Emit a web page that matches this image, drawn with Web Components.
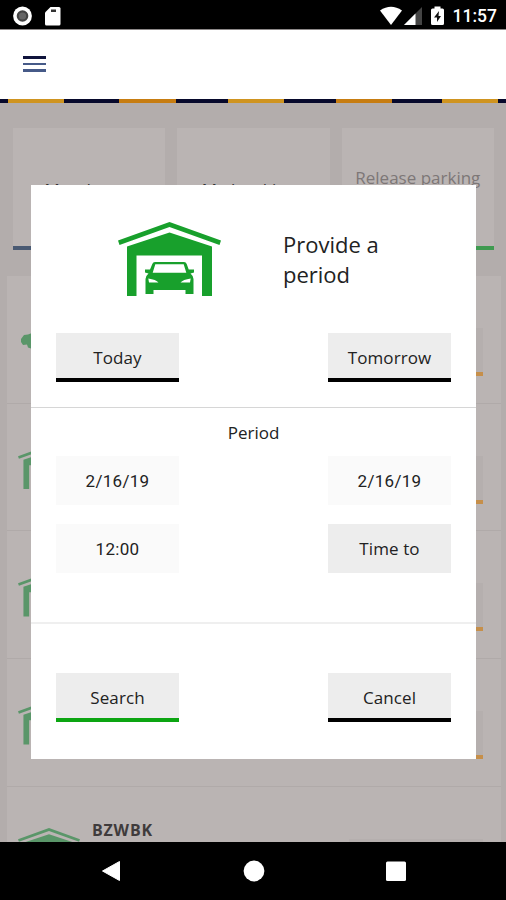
<!DOCTYPE html>
<html lang="en">
<head>
<meta charset="utf-8">
<title>Parking</title>
<style>
    html, body{
        margin: 0;
        height: 100%;
        overflow: hidden;
    }
    body{
        font-family: "Open Sans", "Noto Sans", sans-serif;
        color: #222;
    }
</style>
</head>
<body>
<parking-app>
    <status-bar slot="top" time="11:57"></status-bar>
    <app-bar slot="top"></app-bar>
    <tile-row>
        <menu-tile accent="#4a5a73">Mandatory</menu-tile>
        <menu-tile accent="#4a5a73">My bookings</menu-tile>
        <menu-tile accent="#3f9a50" muted>Release parking</menu-tile>
    </tile-row>
    <parking-list>
        <parking-row icon="tree"></parking-row>
        <parking-row icon="garage"></parking-row>
        <parking-row icon="garage"></parking-row>
        <parking-row icon="garage"></parking-row>
        <parking-row icon="garage">BZWBK</parking-row>
    </parking-list>
    <period-dialog slot="overlay" heading="Provide a period">
        <flat-button slot="days" accent="#000">Today</flat-button>
        <flat-button slot="days" accent="#000">Tomorrow</flat-button>
        <flat-button slot="period" filled>2/16/19</flat-button>
        <flat-button slot="period" filled>2/16/19</flat-button>
        <flat-button slot="period" filled>12:00</flat-button>
        <flat-button slot="period">Time to</flat-button>
        <flat-button slot="actions" accent="#0ca512">Search</flat-button>
        <flat-button slot="actions" accent="#000">Cancel</flat-button>
    </period-dialog>
    <nav-bar slot="bottom"></nav-bar>
</parking-app>

<script>
(function () {
'use strict';

const makeTemplate = function (strings) {
    let template = document.createElement('template');
    template.innerHTML = strings[0];
    return template;
};

const attachTemplate = function (element, template) {
    let shadowRoot = element.attachShadow({ mode: 'open' });
    shadowRoot.appendChild(document.importNode(template.content, true));
    return shadowRoot;
};

// elements that only need markup and styles
const defineStatic = function (name, template) {
    customElements.define(name, class extends HTMLElement {
        constructor() {
            super();
            attachTemplate(this, template);
        }
    });
};

defineStatic('parking-app', makeTemplate`<style>
    :host{
        display: flex;
        flex-direction: column;
        height: 100vh;
        overflow: hidden;
        background: #b3adac;
    }
    main{
        position: relative;
        flex: 1;
        min-height: 0;
        overflow: hidden;
    }
</style>
    <slot name="top"></slot>
    <main>
        <slot></slot>
        <slot name="overlay"></slot>
    </main>
    <slot name="bottom"></slot>
`);

const statusTemplate = makeTemplate`<style>
    :host{
        display: flex;
        align-items: center;
        box-sizing: border-box;
        height: 30px;
        padding: 0 9px 0 12px;
        background: #000;
        border-bottom: 1px solid #8c8888;
        color: #fff;
        font: 500 17.500px/30px Roboto, sans-serif;
    }
    svg{
        display: block;
    }
    .card{
        margin-left: 11px;
    }
    .wifi{
        margin-left: auto;
    }
    .signal{
        margin-left: 1px;
    }
    .battery{
        margin: 0 9px 0 9px;
    }
    .time{
        padding-top: 3px;
    }
</style>
    <svg width="22" height="22" viewBox="0 0 22 22"><circle cx="10.5" cy="12" r="9.4" fill="#fff"/><circle cx="10.5" cy="12" r="5.8" fill="#444"/><circle cx="10.5" cy="12" r="3.6" fill="#666"/></svg>
    <svg class="card" width="16" height="22" viewBox="0 0 16 22"><path fill="#fff" d="M5.500 3H14q1.500 0 1.500 1.500V20q0 1.500-1.500 1.500H1.500Q0 21.500 0 20V8.500z"/><path fill="#333" d="M6 5.500h5v2.500H6z"/></svg>
    <svg class="wifi" width="24" height="22" viewBox="0 0 24 22"><path fill="#fff" d="M1 6.500Q12-1 23 6.500L12 21z"/></svg>
    <svg class="signal" width="18" height="22" viewBox="0 0 18 22"><path fill="#444" d="M0 21L18 3v18z"/><path fill="#fff" d="M0 21L11.500 9.500V21z"/></svg>
    <svg class="battery" width="13" height="22" viewBox="0 0 13 22"><path fill="#fff" d="M3.500 2.500h6v2h2q1.500 0 1.500 1.500v13.500q0 1.500-1.500 1.500h-10Q0 21 0 19.500V6q0-1.500 1.500-1.500h2z"/><path fill="#111" d="M8 7l-5 6.500h3V18l4-6H7.500z"/></svg>
    <span class="time"></span>
`;
class StatusBar extends HTMLElement {
    constructor() {
        super();
        attachTemplate(this, statusTemplate);
    }
    connectedCallback() {
        this.shadowRoot.querySelector('.time').textContent = this.getAttribute('time');
    }
}
customElements.define('status-bar', StatusBar);

defineStatic('app-bar', makeTemplate`<style>
    :host{
        display: flex;
        flex-direction: column;
        height: 73px;
        background: #fff;
    }
    .menu{
        flex: 1;
        display: flex;
        flex-direction: column;
        gap: 4px;
        padding: 26px 0 0 23px;
    }
    i{
        width: 23px;
        height: 2.5px;
        background: #465a88;
    }
    i:first-child{
        background: #10143c;
    }
    .stripe{
        height: 4px;
        background: linear-gradient(90deg,
            #07092c 8px, #cf9420 8px 64px, #07092c 64px 119px, #c77d12 119px 176px,
            #07092c 176px 228px, #cf9420 228px 284px, #07092c 284px 336px, #c77d12 336px 392px,
            #07092c 392px 442px, #cf9420 442px 498px, #07092c 498px);
    }
</style>
    <div class="menu"><i></i><i></i><i></i></div>
    <div class="stripe"></div>
`);

defineStatic('tile-row', makeTemplate`<style>
    :host{
        display: grid;
        grid-template-columns: repeat(3, 1fr);
        gap: 12px;
        padding: 25px 12px 0 13px;
    }
</style>
    <slot></slot>
`);

const tileTemplate = makeTemplate`<style>
    :host{
        display: block;
        box-sizing: border-box;
        height: 122px;
        padding-top: 38px;
        background: #bab4b3;
        border-bottom: 4px solid var(--accent);
        font-size: 17px;
        line-height: 24px;
        text-align: center;
        white-space: nowrap;
    }
    :host([muted]){
        color: #7d7777;
    }
    :host(:not([muted])){
        padding-top: 50px;
        color: #333;
        letter-spacing: .3px;
    }
</style>
    <slot></slot>
`;
class MenuTile extends HTMLElement {
    constructor() {
        super();
        attachTemplate(this, tileTemplate);
    }
    connectedCallback() {
        this.style.setProperty('--accent', this.getAttribute('accent'));
    }
}
customElements.define('menu-tile', MenuTile);

defineStatic('garage-icon', makeTemplate`<style>
    :host{
        display: block;
        width: 103px;
        height: 74px;
        color: #18a02c;
    }
    svg{
        display: block;
        width: 100%;
        height: 100%;
    }
</style>
    <svg viewBox="118 222 103 74">
        <g fill="currentColor">
            <path d="M118 240.500L169.500 222L221 240.500L219.500 245L169.500 227L119.500 245z"/>
            <path d="M127 246.500L169.500 232.500L212 246.500V296H202V255.500H136.500V296H127z"/>
            <path fill-rule="evenodd" d="M155 262H184Q186 262 186.700 264L188.700 269.500H194V272.500L190.500 273.500Q193.500 276 193.500 279V294H185.500V290H153.500V294H145.500V279Q145.500 276 148.500 273.500L145 272.500V269.500H150L152.300 264Q153 262 155 262zM155.300 264.300L152.700 272.800H186.300L183.700 264.300zM148.300 278.500L149 282.500H158.500Q156 279.500 148.300 278.500zM190.700 278.500Q183 279.500 180.500 282.500H190z"/>
        </g>
    </svg>
`);

defineStatic('tree-icon', makeTemplate`<style>
    :host{
        display: block;
        width: 56px;
        height: 40px;
    }
</style>
    <svg width="56" height="40" viewBox="0 0 56 40">
        <path fill="currentColor" d="M0 6l3-4 4-.500 4-1.500 8 1 8 5 8 8-8 6H12l-2-4.500-3-1-1-3-4 .500-2-3z"/>
    </svg>
`);

defineStatic('parking-list', makeTemplate`<style>
    :host{
        display: block;
        margin: 26px 5px 0 7px;
        background: #bab4b3;
    }
</style>
    <slot></slot>
`);

const rowTemplate = makeTemplate`<style>
    :host{
        display: flex;
        align-items: flex-start;
        box-sizing: border-box;
        height: 127.700px;
        padding: 0 18px 0 11px;
        border-bottom: 1px solid #b0aaa9;
        font-size: 16px;
        font-weight: 700;
        line-height: 20px;
        letter-spacing: .8px;
        color: #3f3b3c;
    }
    .icon{
        width: 62px;
        padding-top: 41px;
    }
    garage-icon{
        width: 62px;
        height: 44.500px;
        color: #5a9669;
    }
    tree-icon{
        margin: 16px 0 0 3px;
        color: #5a9669;
    }
    :host([icon="garage"]) tree-icon,
    :host([icon="tree"]) garage-icon{
        display: none;
    }
    .name{
        flex: 1;
        padding: 33px 0 0 12px;
    }
    .action{
        box-sizing: border-box;
        width: 134px;
        height: 48px;
        margin-top: 52px;
        background: #b5afae;
        border-bottom: 4px solid #c68f4a;
    }
</style>
    <div class="icon"><garage-icon></garage-icon><tree-icon></tree-icon></div>
    <div class="name"><slot></slot></div>
    <div class="action"></div>
`;
defineStatic('parking-row', rowTemplate);

const buttonTemplate = makeTemplate`<style>
    :host{
        display: block;
        box-sizing: border-box;
        width: 123px;
        height: 49px;
        background: #ededed;
        font-size: 17px;
        line-height: 50px;
        letter-spacing: .1px;
        text-align: center;
        cursor: pointer;
    }
    :host([accent]){
        border-bottom: 4px solid var(--accent);
    }
    :host([filled]){
        background: #fafafa;
        font-family: Roboto, sans-serif;
        letter-spacing: .3px;
    }
</style>
    <slot></slot>
`;
class FlatButton extends HTMLElement {
    constructor() {
        super();
        attachTemplate(this, buttonTemplate);
    }
    connectedCallback() {
        if (this.hasAttribute('accent')) {
            this.style.setProperty('--accent', this.getAttribute('accent'));
        }
    }
}
customElements.define('flat-button', FlatButton);

const dialogTemplate = makeTemplate`<style>
    :host{
        position: absolute;
        top: 82px;
        left: 31px;
        width: 445px;
        height: 574px;
        background: #fff;
    }
    header{
        display: flex;
        height: 148px;
    }
    garage-icon{
        margin: 37px 0 0 87px;
    }
    h1{
        width: 120px;
        margin: 44px 0 0 62px;
        font-size: 22px;
        font-weight: 400;
        line-height: 30px;
    }
    .pair{
        display: grid;
        grid-template-columns: 123px 123px;
        justify-content: space-between;
        row-gap: 19px;
        padding: 0 25px;
    }
    .days{
        padding-bottom: 25px;
        border-bottom: 1px solid #d6d6d6;
    }
    h2{
        margin: 0;
        height: 48px;
        font-size: 17px;
        font-weight: 400;
        line-height: 49px;
        text-align: center;
    }
    .period{
        padding-bottom: 49px;
        border-bottom: 2px solid #efefef;
    }
    .actions{
        padding-top: 49px;
    }
</style>
    <header>
        <garage-icon></garage-icon>
        <h1></h1>
    </header>
    <div class="pair days"><slot name="days"></slot></div>
    <h2>Period</h2>
    <div class="pair period"><slot name="period"></slot></div>
    <div class="pair actions"><slot name="actions"></slot></div>
`;
class PeriodDialog extends HTMLElement {
    constructor() {
        super();
        attachTemplate(this, dialogTemplate);
    }
    connectedCallback() {
        this.shadowRoot.querySelector('h1').textContent = this.getAttribute('heading');
    }
}
customElements.define('period-dialog', PeriodDialog);

defineStatic('nav-bar', makeTemplate`<style>
    :host{
        display: flex;
        justify-content: space-between;
        align-items: center;
        box-sizing: border-box;
        height: 58px;
        padding: 0 100px 0 101px;
        background: #000;
    }
</style>
    <svg width="20" height="22" viewBox="0 0 20 22"><path fill="#fff" stroke="#fff" stroke-linejoin="round" d="M1.500 11L18.500 1.500v19z"/></svg>
    <svg width="22" height="22" viewBox="0 0 22 22"><circle cx="11" cy="11" r="10.400" fill="#fff"/></svg>
    <svg width="20" height="22" viewBox="0 0 20 22"><rect x="0" y="1.500" width="20" height="19.500" rx="1.500" fill="#fff"/></svg>
`);

}());
</script>
</body>
</html>
